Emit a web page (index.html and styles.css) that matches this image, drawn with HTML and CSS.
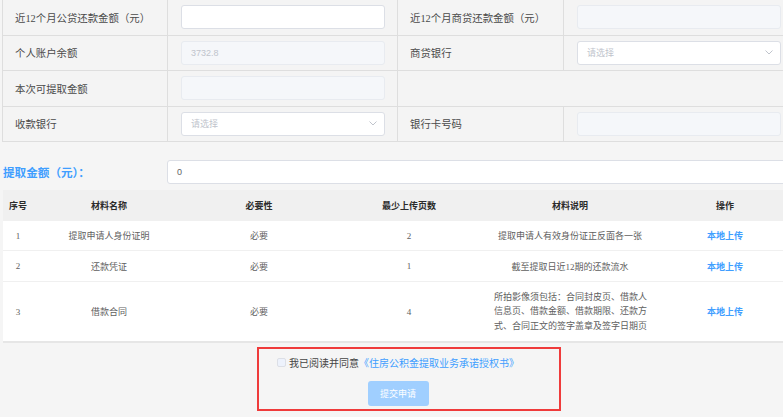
FILE: index.html
```html
<!DOCTYPE html>
<html lang="zh">
<head>
<meta charset="utf-8">
<title>提取申请</title>
<link rel="stylesheet" href="styles.css">
</head>
<body>
<div class="page">
  <div class="form">
    <div class="cell label">近12个月公贷还款金额（元）</div>
    <div class="cell field"><div class="input"></div></div>
    <div class="cell label">近12个月商贷还款金额（元）</div>
    <div class="cell field"><div class="input disabled"></div></div>

    <div class="cell label">个人账户余额</div>
    <div class="cell field"><div class="input disabled">3732.8</div></div>
    <div class="cell label">商贷银行</div>
    <div class="cell field"><div class="input select"><span class="ph">请选择</span><svg class="arrow" width="8" height="5" viewBox="0 0 8 5"><path d="M0.5 0.5 L4 4 L7.5 0.5" fill="none" stroke="#c0c4cc" stroke-width="1"/></svg></div></div>

    <div class="cell label">本次可提取金额</div>
    <div class="cell field"><div class="input disabled"></div></div>
    <div class="cell span2"></div>

    <div class="cell label">收款银行</div>
    <div class="cell field"><div class="input select"><span class="ph">请选择</span><svg class="arrow" width="8" height="5" viewBox="0 0 8 5"><path d="M0.5 0.5 L4 4 L7.5 0.5" fill="none" stroke="#c0c4cc" stroke-width="1"/></svg></div></div>
    <div class="cell label">银行卡号码</div>
    <div class="cell field"><div class="input disabled"></div></div>
  </div>

  <div class="amount">
    <span class="amount-label">提取金额（元）：</span>
    <div class="amount-input">0</div>
  </div>

  <table class="materials">
    <colgroup>
      <col class="c1"><col class="c2"><col class="c3"><col class="c4"><col class="c5"><col class="c6">
    </colgroup>
    <thead>
      <tr><th>序号</th><th>材料名称</th><th>必要性</th><th>最少上传页数</th><th>材料说明</th><th>操作</th></tr>
    </thead>
    <tbody>
      <tr class="r1"><td>1</td><td>提取申请人身份证明</td><td>必要</td><td>2</td><td>提取申请人有效身份证正反面各一张</td><td><a class="upload">本地上传</a></td></tr>
      <tr class="r2"><td>2</td><td>还款凭证</td><td>必要</td><td>1</td><td>截至提取日近12期的还款流水</td><td><a class="upload">本地上传</a></td></tr>
      <tr class="r3"><td>3</td><td>借款合同</td><td>必要</td><td>4</td><td class="desc">所拍影像须包括：合同封皮页、借款人信息页、借款金额、借款期限、还款方式、合同正文的签字盖章及签字日期页</td><td><a class="upload">本地上传</a></td></tr>
    </tbody>
  </table>

  <div class="agree-box">
    <div class="agree"><span class="checkbox"></span><span class="agree-text">我已阅读并同意</span><a class="doc">《住房公积金提取业务承诺授权书》</a></div>
    <button class="submit" type="button">提交申请</button>
  </div>
</div>
</body>
</html>
```

FILE: styles.css
```css
html, body {
  margin: 0;
  padding: 0;
  overflow: hidden;
  background: #f5f5f5;
}

.page {
  width: 800px;
  font-family: "Liberation Serif", "Noto Sans CJK SC", serif;
  color: #555;
}

.form {
  display: grid;
  grid-template-columns: 165px 230px 166px 232px;
  grid-auto-rows: 35.5px;
  margin-left: 2px;
  border-left: 1px solid #dedede;
}

.cell {
  box-sizing: border-box;
  border-right: 1px solid #dedede;
  border-bottom: 1px solid #dedede;
  background: #f4f4f4;
  display: flex;
  align-items: center;
}

.label {
  padding-left: 12px;
  font-size: 10.4px;
  color: #4a4a4a;
}

.field {
  padding-left: 13px;
}

.span2 {
  grid-column: span 2;
}

.input {
  box-sizing: border-box;
  width: 204px;
  height: 24px;
  border: 1px solid #dcdfe6;
  border-radius: 3px;
  background: #fff;
  display: flex;
  align-items: center;
  padding-left: 9px;
  font-family: "Liberation Sans", "Noto Sans CJK SC", sans-serif;
  font-size: 9px;
  color: #c0c4cc;
}

.input.disabled {
  background: #f5f7fa;
  border-color: #e8ebf0;
}

.select {
  justify-content: space-between;
  padding-right: 7px;
}

.ph {
  color: #c0c4cc;
  font-family: "Noto Sans CJK SC", sans-serif;
}

.amount {
  display: flex;
  align-items: center;
  margin-top: 18px;
  margin-bottom: 6px;
}

.amount-label {
  width: 164px;
  padding-left: 3px;
  font-family: "Noto Sans CJK SC", sans-serif;
  font-size: 11.6px;
  font-weight: bold;
  color: #409eff;
}

.amount-input {
  flex: 1;
  box-sizing: border-box;
  height: 24px;
  background: #fff;
  border: 1px solid #dcdfe6;
  border-radius: 3px;
  display: flex;
  align-items: center;
  padding-left: 9px;
  font-family: "Liberation Sans", sans-serif;
  font-size: 9px;
  color: #606266;
}

.materials {
  margin-left: 3px;
  width: 792px;
  border-collapse: collapse;
  table-layout: fixed;
  background: #fff;
  font-size: 9px;
}

.c1 { width: 30px; }
.c2 { width: 152px; }
.c3 { width: 148px; }
.c4 { width: 152px; }
.c5 { width: 170px; }
.c6 { width: 140px; }

.materials th {
  height: 31px;
  padding: 0;
  background: #f0f0f0;
  color: #2b2b2b;
  font-weight: bold;
  text-align: center;
  font-family: "Noto Sans CJK SC", sans-serif;
}

.materials td {
  padding: 0;
  text-align: center;
  color: #606060;
  border-bottom: 1px solid #f0f0f0;
}

.r1 td { height: 29px; }
.r2 td { height: 30px; }
.r3 td { height: 59px; border-bottom: 2px solid #e6e6e6; }

.materials td.desc {
  text-align: left;
  padding: 0 6px 0 9px;
  line-height: 14.5px;
}

.upload {
  color: #409eff;
  font-weight: bold;
  font-family: "Noto Sans CJK SC", sans-serif;
}

.agree-box {
  box-sizing: border-box;
  margin-left: 257px;
  margin-top: 4px;
  width: 304px;
  height: 64px;
  border: 2px solid #ef3b3b;
  display: flex;
  flex-direction: column;
  align-items: center;
  padding: 6px 22px 0 0;
}

.agree {
  display: flex;
  align-items: center;
  height: 14px;
  font-family: "Noto Sans CJK SC", sans-serif;
  font-size: 10px;
}

.checkbox {
  box-sizing: border-box;
  width: 9px;
  height: 9px;
  border: 1px solid #dcdfe6;
  border-radius: 2px;
  background: #edf2fc;
  margin-right: 3px;
}

.agree-text {
  color: #444;
}

.doc {
  color: #409eff;
}

.submit {
  margin-top: 12px;
  width: 61px;
  height: 25px;
  border: none;
  border-radius: 3px;
  background: #a0cfff;
  color: #fff;
  font-family: "Noto Sans CJK SC", sans-serif;
  font-size: 9px;
  padding: 0;
}
```
